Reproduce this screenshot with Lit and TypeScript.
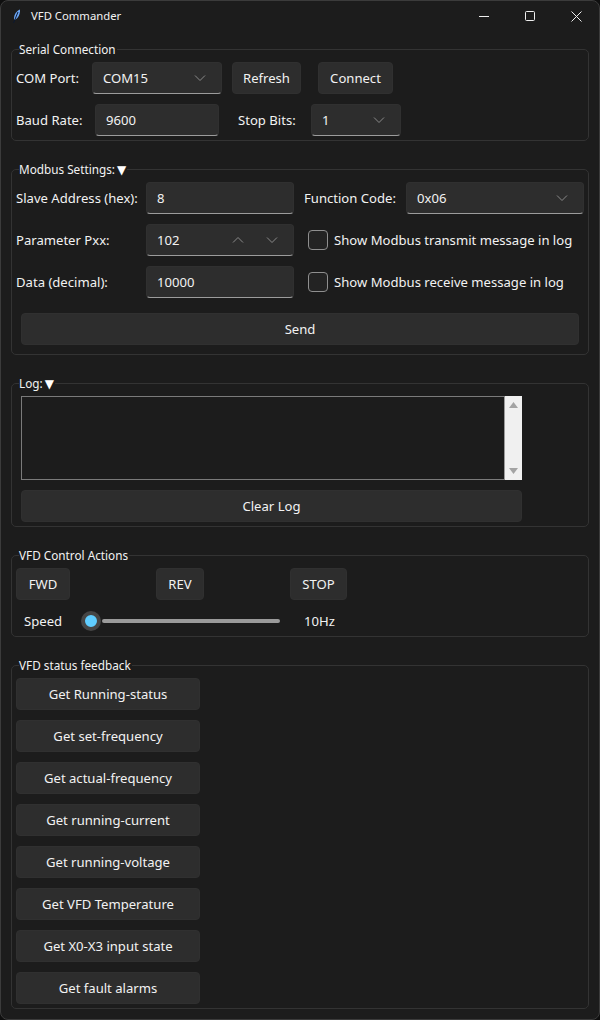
import { LitElement, html, css, svg } from 'lit'
import { customElement } from 'lit/decorators.js'

const chevron = (up = false) => html`<svg class="chev" width="12" height="8" viewBox="0 0 12 8">
  <polyline points=${up ? '1,6.5 6,1.5 11,6.5' : '1,1.5 6,6.5 11,1.5'} fill="none" stroke="#8a8a8a" stroke-width="1" />
</svg>`

const statusActions = [
  'Get Running-status',
  'Get set-frequency',
  'Get actual-frequency',
  'Get running-current',
  'Get running-voltage',
  'Get VFD Temperature',
  'Get X0-X3 input state',
  'Get fault alarms',
]

@customElement('app-root')
export class AppRoot extends LitElement {
  static styles = css`
    :host {
      display: block;
      width: 600px;
      height: 1020px;
      background: #0f0f0f;
      font-family: 'Noto Sans', 'Open Sans', sans-serif;
      font-size: 13.1px;
      color: #f2f2f2;
    }

    * {
      box-sizing: border-box;
    }

    .window {
      height: 1020px;
      background: #1c1c1c;
      border: 1px solid #3b3b3b;
      border-radius: 8px;
      overflow: hidden;
      padding: 0 10px;
    }

    .titlebar {
      height: 48px;
      margin: 0 -10px;
      padding: 0 0 17px 10px;
      display: flex;
      align-items: center;
    }

    .title {
      font-size: 11.3px;
      line-height: 14px;
      margin: -2px 0 0 10px;
    }

    .controls {
      margin-left: auto;
      display: flex;
      align-items: center;
      margin-right: 17px;
      gap: 35px;
    }

    .group {
      position: relative;
      border: 1px solid #333;
      border-radius: 5px;
      padding: 12px 4px 4px;
      margin-bottom: 28px;
    }

    .legend {
      position: absolute;
      left: 7px;
      top: -8px;
      height: 16px;
      line-height: 15px;
      padding-right: 1px;
      background: #1c1c1c;
      font-size: 11.75px;
    }

    .tri {
      font-family: 'DejaVu Sans', sans-serif;
      font-size: 12px;
      color: #fff;
      margin-left: -1px;
    }

    .row {
      display: flex;
      align-items: center;
      height: 32px;
    }

    .row + .row {
      margin-top: 10px;
    }

    .control {
      height: 32px;
      background: #2d2d2d;
      border: 1px solid #303030;
      border-radius: 4px;
      display: flex;
      align-items: center;
      padding: 0 10px;
      flex: none;
    }

    .field {
      border-bottom: 1px solid #9c9c9c;
    }

    .combo .chev {
      margin-left: auto;
      margin-right: 5px;
    }

    .spin .chev {
      margin-left: auto;
    }

    .spin .chev + .chev {
      margin-left: 22px;
      margin-right: 5px;
    }

    button {
      height: 32px;
      background: #2d2d2d;
      border: 1px solid #303030;
      border-radius: 4px;
      color: inherit;
      font: inherit;
      padding: 0;
      flex: none;
      display: block;
    }

    .lbl {
      flex: none;
    }

    .check {
      width: 20px;
      height: 20px;
      border: 1px solid #8f8f8f;
      border-radius: 4px;
      background: #232323;
      flex: none;
      margin: 0 6px 0 14px;
    }

    .send {
      width: 558px;
      margin: 15px 0 5px 5px;
    }

    .logbox {
      display: flex;
      width: 501px;
      height: 84px;
      margin-left: 5px;
    }

    .logtext {
      flex: 1;
      background: #1c1c1c;
      border: 1px solid #7a7a7a;
      border-right-color: #9a9a9a;
    }

    .scroll {
      width: 17px;
      background: #f0f0f0;
      display: flex;
      flex-direction: column;
      justify-content: space-between;
      align-items: center;
      padding: 6px 0;
    }

    .clear {
      display: block;
      width: 501px;
      margin: 10px 0 0 5px;
    }

    .row.speed {
      height: 20px;
      margin: 11px 0 1px;
    }

    .thumb {
      width: 20px;
      height: 20px;
      border-radius: 50%;
      background: #60cdff;
      border: 4px solid #454545;
      flex: none;
      margin-left: 17px;
    }

    .track {
      width: 178px;
      height: 4px;
      margin-left: 1px;
      border-radius: 2px;
      background: #9a9a9a;
      flex: none;
    }

    .stack {
      display: flex;
      flex-direction: column;
      gap: 10px;
      width: 184px;
    }

    .stack button {
      width: 100%;
    }
  `

  render() {
    return html`
      <div class="window">
        <div class="titlebar">
          <svg width="10" height="16" viewBox="0 0 10 16">
            <path d="M9 0.500 C6 1.500 3 5 3 10 L3.500 11 C6 10 8 7 8.500 5 C9 3.500 9.200 2 9 0.500 Z" fill="#6aa5f5" />
            <path d="M7 3 L2.500 14" stroke="#0b1830" stroke-width="1" />
          </svg>
          <span class="title">VFD Commander</span>
          <div class="controls">
            <svg width="11" height="11" viewBox="0 0 11 11"><path d="M0 5.500H10" stroke="#eee" /></svg>
            <svg width="11" height="11" viewBox="0 0 11 11"><rect x="0.500" y="0.500" width="9" height="9" rx="1" fill="none" stroke="#eee" /></svg>
            <svg width="11" height="11" viewBox="0 0 11 11"><path d="M0.500 0.500L10.500 10.500M10.500 0.500L0.500 10.500" stroke="#eee" /></svg>
          </div>
        </div>

        <section class="group">
          <div class="legend">Serial Connection</div>
          <div class="row">
            <span class="lbl" style="width:76px">COM Port:</span>
            <div class="control field combo" style="width:130px">COM15${chevron()}</div>
            <button style="width:69px;margin-left:10px">Refresh</button>
            <button style="width:75px;margin-left:17px">Connect</button>
          </div>
          <div class="row">
            <span class="lbl" style="width:79px">Baud Rate:</span>
            <div class="control field" style="width:124px">9600</div>
            <span class="lbl" style="width:73px;margin-left:19px">Stop Bits:</span>
            <div class="control field combo" style="width:90px">1${chevron()}</div>
          </div>
        </section>

        <section class="group">
          <div class="legend">Modbus Settings: <span class="tri">▼</span></div>
          <div class="row">
            <span class="lbl" style="width:130px">Slave Address (hex):</span>
            <div class="control field" style="width:148px">8</div>
            <span class="lbl" style="width:102px;margin-left:10px">Function Code:</span>
            <div class="control field combo" style="width:178px">0x06${chevron()}</div>
          </div>
          <div class="row">
            <span class="lbl" style="width:130px">Parameter Pxx:</span>
            <div class="control field spin" style="width:148px">102${chevron(true)}${chevron()}</div>
            <div class="check"></div>
            <span class="lbl">Show Modbus transmit message in log</span>
          </div>
          <div class="row">
            <span class="lbl" style="width:130px">Data (decimal):</span>
            <div class="control field" style="width:148px">10000</div>
            <div class="check"></div>
            <span class="lbl">Show Modbus receive message in log</span>
          </div>
          <button class="send">Send</button>
        </section>

        <section class="group">
          <div class="legend">Log: <span class="tri">▼</span></div>
          <div class="logbox">
            <div class="logtext"></div>
            <div class="scroll">
              <svg width="9" height="6" viewBox="0 0 9 6">${svg`<path d="M4.500 0L9 6H0Z" fill="#a3a3a3" />`}</svg>
              <svg width="9" height="6" viewBox="0 0 9 6">${svg`<path d="M0 0H9L4.500 6Z" fill="#a3a3a3" />`}</svg>
            </div>
          </div>
          <button class="clear">Clear Log</button>
        </section>

        <section class="group">
          <div class="legend">VFD Control Actions</div>
          <div class="row">
            <button style="width:54px">FWD</button>
            <button style="width:48px;margin-left:86px">REV</button>
            <button style="width:57px;margin-left:86px">STOP</button>
          </div>
          <div class="row speed">
            <span class="lbl" style="width:40px;margin-left:8px">Speed</span>
            <div class="thumb"></div>
            <div class="track"></div>
            <span class="lbl" style="margin-left:24px">10Hz</span>
          </div>
        </section>

        <section class="group">
          <div class="legend">VFD status feedback</div>
          <div class="stack">
            ${statusActions.map((label) => html`<button>${label}</button>`)}
          </div>
        </section>
      </div>
    `
  }
}
